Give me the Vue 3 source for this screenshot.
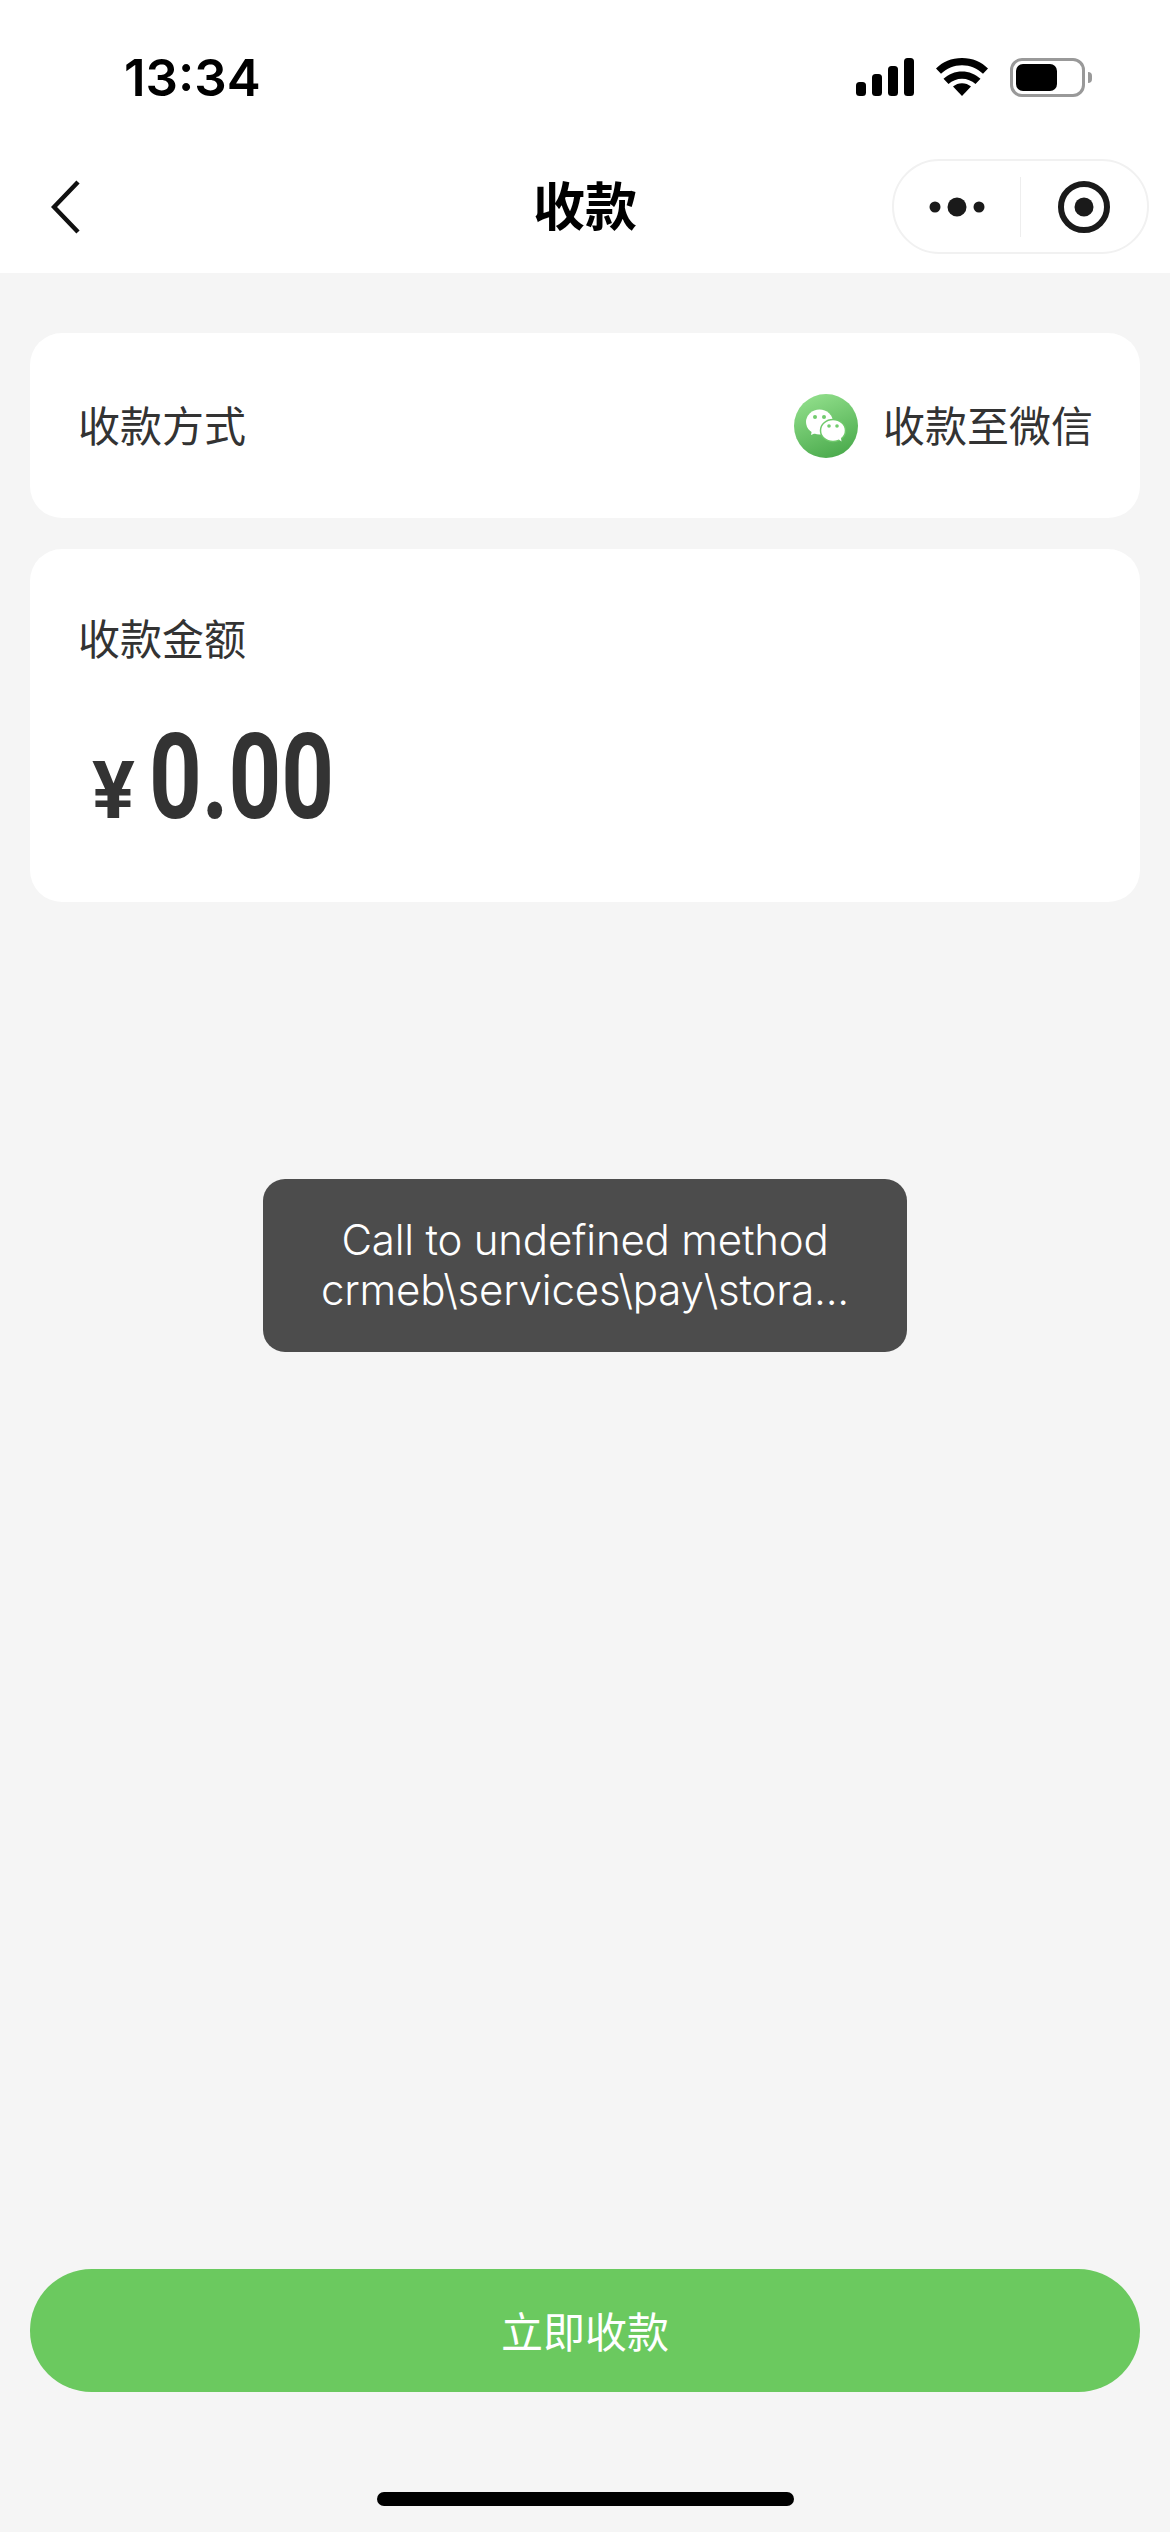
<template>
  <div class="page">
    <header class="top">
      <div class="status">
        <span class="time">13:34</span>
        <div class="status-icons">
          <svg class="signal" width="58" height="38" viewBox="0 0 58 38">
            <rect x="0" y="24" width="10" height="14" rx="3.5" />
            <rect x="16" y="16" width="10" height="22" rx="3.5" />
            <rect x="32" y="8" width="10" height="30" rx="3.5" />
            <rect x="48" y="0" width="10" height="38" rx="3.5" />
          </svg>
          <svg class="wifi" width="52" height="38" viewBox="0 0 52 38">
            <path d="M26 38 L17 28.5 C22 24 30 24 35 28.5 Z" />
            <path d="M26 13.5 C33 13.5 39.500 16.200 44.500 20.800 L39.500 26 C35.800 22.700 31 20.700 26 20.700 C21 20.700 16.200 22.700 12.500 26 L7.500 20.800 C12.500 16.200 19 13.500 26 13.500 Z" />
            <path d="M26 0 C36.500 0 45.500 4 52 10.500 L47 15.800 C41.500 10.500 34 7.200 26 7.200 C18 7.200 10.500 10.500 5 15.800 L0 10.500 C6.500 4 15.500 0 26 0 Z" />
          </svg>
          <div class="battery">
            <div class="battery-fill"></div>
            <div class="battery-nub"></div>
          </div>
        </div>
      </div>
      <nav class="nav">
        <svg class="back" width="30" height="54" viewBox="0 0 30 54">
          <path d="M27 2 L3 27 L27 52" />
        </svg>
        <h1 class="title">收款</h1>
        <div class="capsule">
          <div class="capsule-side">
            <svg width="56" height="22" viewBox="0 0 56 22">
              <circle cx="6" cy="11" r="5.500" />
              <circle cx="28" cy="11" r="9.500" />
              <circle cx="50" cy="11" r="5.500" />
            </svg>
          </div>
          <div class="capsule-line"></div>
          <div class="capsule-side">
            <svg width="54" height="54" viewBox="0 0 54 54">
              <circle class="ring" cx="27" cy="27" r="23" />
              <circle cx="27" cy="27" r="9.500" />
            </svg>
          </div>
        </div>
      </nav>
    </header>

    <main class="content">
      <section class="card method">
        <span class="label">收款方式</span>
        <div class="method-value">
          <svg class="wx" width="64" height="64" viewBox="0 0 64 64">
            <defs>
              <linearGradient id="wxBg" x1="0.3" y1="0" x2="0.7" y2="1">
                <stop offset="0" stop-color="#90de8a" />
                <stop offset="1" stop-color="#4aaa4c" />
              </linearGradient>
            </defs>
            <circle cx="32" cy="32" r="32" fill="url(#wxBg)" />
            <g fill="#fff">
              <ellipse cx="25.500" cy="28" rx="13.500" ry="12.500" />
              <path d="M18 36 L17 41 L24 38 Z" />
            </g>
            <ellipse cx="39" cy="36.500" rx="12.500" ry="11" fill="#fff" stroke="#6fc96b" stroke-width="1.500" />
            <path d="M43 44 L47.500 47.500 L46.500 42 Z" fill="#fff" />
            <g fill="#72cc6e">
              <circle cx="21" cy="23" r="2" />
              <circle cx="30" cy="23" r="2" />
              <circle cx="35" cy="32" r="1.800" />
              <circle cx="43" cy="32" r="1.800" />
            </g>
          </svg>
          <span class="label">收款至微信</span>
        </div>
      </section>

      <section class="card amount">
        <div class="amount-label">收款金额</div>
        <div class="amount-value">
          <span class="yen">¥</span>
          <span class="num">0.00</span>
        </div>
      </section>

      <div class="spacer"></div>

      <button class="pay-btn">立即收款</button>
    </main>

    <div class="home-bar"></div>

    <div class="toast">Call to undefined method crmeb\services\pay\stora...</div>
  </div>
</template>

<script setup>
</script>

<style>
body {
  background: #f5f5f5;
}
</style>

<style scoped>
.page {
  position: relative;
  width: 1170px;
  height: 2532px;
  display: flex;
  flex-direction: column;
  background: #f5f5f5;
  overflow: hidden;
  font-family: "Noto Sans CJK SC", "Noto Sans", sans-serif;
  color: #333;
}

.top {
  background: #fff;
  height: 273px;
}

.status {
  height: 132px;
  padding: 48px 85px 0 124px;
  box-sizing: border-box;
  display: flex;
  justify-content: space-between;
  align-items: flex-start;
}

.time {
  font-family: Inter, sans-serif;
  font-weight: 600;
  font-size: 51px;
  line-height: 60px;
  color: #000;
}

.status-icons {
  display: flex;
  align-items: flex-start;
  padding-top: 10px;
}

.signal,
.wifi {
  fill: #000;
}

.wifi {
  margin-left: 22px;
}

.battery {
  position: relative;
  width: 75px;
  height: 39px;
  margin-left: 22px;
  box-sizing: border-box;
  border: 3px solid #999;
  border-radius: 12px;
  padding: 3px;
}

.battery-fill {
  width: 41px;
  height: 27px;
  background: #000;
  border-radius: 7px;
}

.battery-nub {
  position: absolute;
  right: -10px;
  top: 11px;
  width: 4px;
  height: 11px;
  background: #999;
  border-radius: 0 6px 6px 0;
}

.nav {
  position: relative;
  height: 141px;
  display: flex;
  align-items: center;
  justify-content: center;
}

.back {
  position: absolute;
  left: 51px;
  top: 48px;
  fill: none;
  stroke: #111;
  stroke-width: 4.5;
}

.title {
  margin: 2px 0 0;
  font-size: 52px;
  font-weight: 700;
  color: #000;
}

.capsule {
  position: absolute;
  left: 892px;
  top: 27px;
  width: 257px;
  height: 95px;
  box-sizing: border-box;
  border: 2px solid #f1f1f1;
  border-radius: 48px;
  display: flex;
  align-items: center;
  fill: #1a1a1a;
}

.capsule-side {
  width: 127px;
  display: flex;
  justify-content: center;
}

.capsule-line {
  width: 1px;
  height: 60px;
  background: #eee;
}

.ring {
  fill: none;
  stroke: #1a1a1a;
  stroke-width: 6;
}

.content {
  flex: 1;
  display: flex;
  flex-direction: column;
  padding: 60px 30px 0;
  gap: 31px;
  font-size: 42px;
}

.card {
  background: #fff;
  border-radius: 32px;
}

.method {
  height: 185px;
  padding: 0 47px 0 48px;
  display: flex;
  align-items: center;
  justify-content: space-between;
  color: #333;
}

.label {
  position: relative;
  top: -2px;
}

.method-value {
  display: flex;
  align-items: center;
  gap: 25px;
}

.amount {
  height: 353px;
  box-sizing: border-box;
  padding: 58px 48px 0;
}

.amount-label {
  line-height: 60px;
}

.amount-value {
  display: flex;
  align-items: baseline;
  margin-top: 51px;
  padding-left: 14px;
  color: #333;
  font-family: Roboto, sans-serif;
}

.yen {
  font-size: 80px;
  font-weight: 700;
  line-height: 120px;
}

.num {
  display: inline-block;
  font-size: 118px;
  font-weight: 700;
  line-height: 120px;
  margin-left: 14px;
  transform: scaleX(0.78);
  transform-origin: left center;
}

.spacer {
  flex: 1;
}

.pay-btn {
  height: 123px;
  border: none;
  border-radius: 62px;
  background: #6bc95f;
  color: #fff;
  font-family: inherit;
  font-size: 42px;
  padding: 0 0 3px;
  margin-bottom: 140px;
  flex-shrink: 0;
}

.home-bar {
  position: absolute;
  left: 377px;
  top: 2492px;
  width: 417px;
  height: 14px;
  border-radius: 7px;
  background: #000;
}

.toast {
  position: absolute;
  left: 263px;
  top: 1179px;
  width: 644px;
  height: 173px;
  box-sizing: border-box;
  padding: 36px 50px;
  border-radius: 22px;
  background: #4c4c4c;
  color: #fff;
  font-family: Inter, sans-serif;
  font-weight: 300;
  font-size: 42px;
  letter-spacing: -0.2px;
  line-height: 50px;
  text-align: center;
}
</style>
